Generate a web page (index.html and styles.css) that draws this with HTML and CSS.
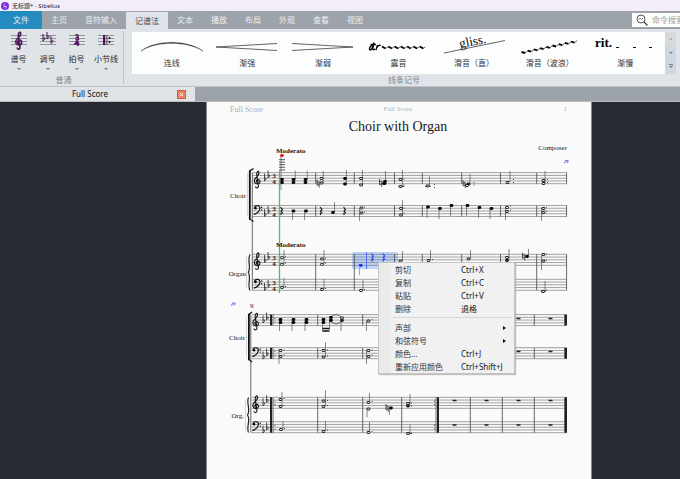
FILE: index.html
```html
<!DOCTYPE html>
<html lang="zh-CN">
<head>
<meta charset="utf-8">
<title>无标题* - Sibelius</title>
<link rel="stylesheet" href="styles.css">
</head>
<body>
<header class="titlebar">
  <svg class="logo" viewBox="0 0 8 8" aria-hidden="true"><circle cx="4" cy="4" r="4" fill="#7a2de0"/><path d="M4 1.4C2.4 3 2.4 3.6 4 4.2S5.600 5.400 4 6.700M2 5.300C3 4 5 4 6 5.300" fill="none" stroke="#e6d4ff" stroke-width=".7"/></svg>
  <span>无标题* - Sibelius</span>
</header>
<nav class="tabs">
  <button class="tab file">文件</button>
  <button class="tab">主页</button>
  <button class="tab">音符输入</button>
  <button class="tab active">记谱法</button>
  <button class="tab">文本</button>
  <button class="tab">播放</button>
  <button class="tab">布局</button>
  <button class="tab">外观</button>
  <button class="tab">查看</button>
  <button class="tab">视图</button>
  <label class="search">
    <svg viewBox="0 0 12 12" aria-hidden="true"><g fill="none" stroke="#444" stroke-width=".9"><circle cx="5" cy="5" r="4"/><path d="M8 8l3.500 3.500" stroke-width="1.300"/><path d="M2.500 5.500l1.500-1.500 1.500 1.500 1.500-1.500" stroke-width=".7"/></g></svg>
    <input type="text" placeholder="命令搜索" aria-label="命令搜索">
  </label>
</nav>
<section class="ribbon">
  <div class="group common">
    <div class="tools">
      <button class="tool">
        <svg viewBox="0 0 16 20"><path class="lines" d="M0 4.500h16M0 7.500h16M0 10.500h16M0 13.500h16"/><path class="purple" d="M8 12.500C6 12 6.300 9 8.600 9C11.600 9.200 11.400 14 8 14C4 13.800 4 9.500 6.500 7.500C9 5.500 10.500 3.500 9.500 1.500C8 .5 7 3.500 7.300 5.500L9 16C9 19 5.800 18.500 6.500 16.500"/></svg>
        <span>谱号</span><i class="caret"></i>
      </button>
      <button class="tool">
        <svg viewBox="0 0 16 20"><path class="lines" d="M0 4.500h16M0 7.500h16M0 10.500h16M0 13.500h16"/><path class="purple thin" d="M3 3v7C6 8 5.500 5.500 3 7.500M7 1v7C10 6 9.500 3.500 7 5.500M11 5v7.500C14 10.500 13.500 8 11 10"/></svg>
        <span>调号</span><i class="caret"></i>
      </button>
      <button class="tool">
        <svg viewBox="0 0 16 20"><path class="lines" d="M0 4.500h16M0 7.500h16M0 10.500h16M0 13.500h16"/><path class="purple" d="M6.500 4.500C8 3 9.500 4 9 5.500L7.800 6.500C10 6.500 10 9 8.500 9L6.500 8.500M8.500 9.500L6 13H10.500M9 10.500V15"/></svg>
        <span>拍号</span><i class="caret"></i>
      </button>
      <button class="tool wide">
        <svg viewBox="0 0 16 20"><path class="lines" d="M0 4.500h16M0 7.500h16M0 10.500h16M0 13.500h16"/><path d="M5 4h2.200v10H5zM8.500 4h.8v10h-.8z" fill="#47104f"/><circle cx="11.500" cy="7" r=".9"/><circle cx="11.500" cy="11" r=".9"/></svg>
        <span>小节线</span><i class="caret"></i>
      </button>
    </div>
    <h2>普通</h2>
  </div>
  <div class="group marks">
    <div class="gallery">
      <div class="items">
        <button class="item"><svg viewBox="0 0 72 24"><path d="M5 19C20 7.500 51 7.500 67 19C51 8.800 20 8.800 5 19z" stroke="#222" stroke-width=".4"/></svg><span>连线</span></button>
        <button class="item"><svg viewBox="0 0 72 24"><path class="hair" d="M66 11.500L5 15L66 18.500"/></svg><span>渐强</span></button>
        <button class="item"><svg viewBox="0 0 72 24"><path class="hair" d="M5 11.500L66 15L5 18.500"/></svg><span>渐弱</span></button>
        <button class="item"><svg viewBox="0 0 72 24"><path d="M9.500 14C7 13 5.500 18 7.200 18C8.800 18 10 14.500 11 10.500L9.800 16.500C9.600 18.500 11 18 12 17M7.500 12.500h5.500M14.500 13L13 18M14 15.500C15.500 13 17 12.500 17.500 14" fill="none" stroke="#000" stroke-width="1.300"/><path class="wave" d="M19 14.500L22.500 16.500M25.300 14.500L28.800 16.500M31.600 14.500L35.100 16.500M37.900 14.500L41.400 16.500M44.200 14.500L47.700 16.500M50.500 14.500L54 16.500M56.800 14.500L60.300 16.500"/><path class="hair" d="M22.500 16.500l2.800-2M28.800 16.500l2.800-2M35.100 16.500l2.800-2M41.400 16.500l2.800-2M47.700 16.500l2.800-2M54 16.500l2.800-2M60.300 16.500l2-1.500"/></svg><span>震音</span></button>
        <button class="item"><svg viewBox="0 0 72 24"><path class="hair" d="M6 21L67 8.500"/><text class="gliss" transform="rotate(-11 22 16)" x="22" y="16">gliss.</text></svg><span>滑音（直）</span></button>
        <button class="item"><svg viewBox="0 0 72 24"><path class="wave" d="M7.500 20l3.500 1M13.700 18.700l3.500 1M19.900 17.400l3.500 1M26.100 16.100l3.500 1M32.300 14.800l3.500 1M38.500 13.500l3.500 1M44.700 12.200l3.500 1M50.900 10.900l3.500 1M57.100 9.600l3.500 1"/><path class="hair" d="M11 21l2.700-2.300M17.200 19.700l2.700-2.300M23.400 18.400l2.700-2.300M29.600 17.100l2.700-2.300M35.800 15.800l2.700-2.300M42 14.500l2.700-2.300M48.200 13.200l2.700-2.300M54.400 11.900l2.700-2.300M60.600 10.600l2.700-2"/></svg><span>滑音（波浪）</span></button>
        <button class="item"><svg viewBox="0 0 72 24"><text class="rit" x="6" y="15">rit.</text><path d="M27 15.500h3M44 15.500h3M60 15.500h3" stroke="#111"/></svg><span>渐慢</span></button>
      </div>
      <div class="scroller">
        <button aria-label="上一行"><i class="caret up"></i></button>
        <button aria-label="下一行"><i class="caret"></i></button>
        <button aria-label="更多"><i class="caret more"></i></button>
      </div>
    </div>
    <h2>线条记号</h2>
  </div>
</section>
<div class="documents">
  <div class="document"><span>Full Score</span><button class="close" aria-label="关闭"><svg viewBox="0 0 9 9"><path d="M2.500 2.500l4 4M6.500 2.500l-4 4" stroke="#fff" stroke-width="1.200"/></svg></button></div>
</div>
<main class="canvas">
  <article class="paper">
    <svg class="score" viewBox="207 102 384 377" role="img" aria-label="Choir with Organ">
      <defs>
        <path id="treble" d="M.2 1.600C-1.600 1.400-1.600-1.300.3-1.500C3-1.600 3.400 2.600.3 3C-3 3.200-4.200-.8-1.800-3C.4-5 2.200-6.600 1.400-9C.6-11-1-8.500-.8-6.500L1 5C1 7.500-2 7.300-2 5.600" fill="none" stroke="#111" stroke-width="1.100"/>
        <g id="bass"><path d="M-3-.7C-2.600-3.600 2.600-3.600 2.400-.3C2.200 3-1 5-3.600 6" fill="none" stroke="#111" stroke-width="1.200"/><circle cx="-2" cy="-.3" r="1.300"/><circle cx="4.200" cy="-1.300" r=".7"/><circle cx="4.200" cy="1.500" r=".7"/></g>
        <path id="flats" d="M0-5V2.500C2.600.6 2-1.500 0-.4M3.600-8V-.5C6.200-2.400 5.600-4.500 3.600-3.400" fill="none" stroke="#222" stroke-width=".8"/>
        <path id="rest" d="M-1-4L1-1.500L-.5 0L1.300 2C-1 1.200-1 2.500-.2 4" fill="none" stroke="currentColor" stroke-width="1.100"/>
        <path id="natural" d="M-1-4V1.800L1.200 1M1.200 4V-1.800L-1-1" fill="none" stroke="#111" stroke-width=".7"/>
        <path id="quaver" d="M-1 1.200L-.5-1H2.200L1.700.8M-2 1.200H-.8M.6.800H1.800" fill="none" stroke="#4b4be8" stroke-width=".8"/>
        <path id="staff" d="M0 0H314.500M0 2.750H314.500M0 5.500H314.500M0 8.250H314.500M0 11H314.500" fill="none" stroke="#666" stroke-width=".6"/>
      </defs>

      <rect x="352" y="252" width="46" height="17" rx="2" fill="#bdd5fa"/>
      <g>
        <use href="#staff" x="252.300" y="172.700"/><use href="#staff" x="252.300" y="205.500"/>
        <use href="#staff" x="252.300" y="254.300"/><use href="#staff" x="252.300" y="279.300"/>
        <use href="#staff" x="251.800" y="314.600"/><use href="#staff" x="251.800" y="347.700"/>
        <use href="#staff" x="251.800" y="397.300"/><use href="#staff" x="251.800" y="421.700"/>
      </g>
      <path class="bar" d="M252.300 172.700V290.300M250.800 314.600V432.700
        M315.700 172.700v11m0 21.800v11m0 37.800v36M354.300 172.700v11m0 21.800v11m0 37.800v36M394.500 172.700v11m0 21.800v11m0 37.800v36M422.300 172.700v11m0 21.800v11m0 37.800v36M461.700 172.700v11m0 21.800v11m0 37.800v36M500.500 172.700v11m0 21.800v11m0 37.800v36M536.700 172.700v11m0 21.800v11m0 37.800v36M566.600 172.700v11m0 21.800v11m0 37.800v36
        M317.700 314.600v11m0 22.100v11m0 38.600v35.400M362.700 314.600v11m0 22.100v11m0 38.600v35.400M401.700 314.600v11m0 22.100v11m0 38.600v35.400M470.300 314.600v11m0 22.100v11m0 38.600v35.400M502.300 314.600v11m0 22.100v11m0 38.600v35.400M534.300 314.600v11m0 22.100v11m0 38.600v35.400
        M273 314.600v11m0 22.100v11m0 38.600v35.400M436 397.300v35.400M564.500 314.600v11m0 22.100v11m0 38.600v35.400"/>
      <path class="heavy" d="M271 314.600v11m0 22.100v11m0 38.600v35.400M438 397.300v35.400M566 314.600v11m0 22.100v11m0 38.600v35.400"/>
      <path d="M249.800 170.500V219.500M248.900 314V360" stroke="#111" stroke-width="1.800"/>
      <path d="M249 171Q251 170.500 253.500 168.500M249 219Q251 219.500 253.500 221.500M248 314.500Q250 314 252 312M248 359.500Q250 360 252 362" fill="none" stroke="#111" stroke-width="1.200"/>
      <path d="M250 254.500C247 260 251.500 267 248.300 272.300C251.500 278 247 285 250 290.500M248.500 397.500C246 403 251 410 247.500 415C251 420 246 427 248.500 432.500" fill="none" stroke="#222" stroke-width="1.200"/>
      <path d="M247.500 173v43M246.500 256v32M246.500 317v40M245.500 400v31" stroke="#bbb" stroke-width=".6"/>

      <g>
        <use href="#treble" x="257.500" y="181"/><use href="#treble" x="257.500" y="262.600"/><use href="#treble" x="256" y="323"/><use href="#treble" x="256" y="405.600"/>
        <use href="#bass" x="257.500" y="208.500"/><use href="#bass" x="257.500" y="282.200"/><use href="#bass" x="256" y="350.600"/><use href="#bass" x="256" y="424.600"/>
        <use href="#flats" x="264.500" y="178.500"/><use href="#flats" x="264.500" y="214"/><use href="#flats" x="264.500" y="260"/><use href="#flats" x="264.500" y="288"/>
        <use href="#flats" x="263" y="320.500"/><use href="#flats" x="263" y="356.500"/><use href="#flats" x="263" y="403.200"/><use href="#flats" x="263" y="430.500"/>
      </g>
      <g class="meter">
        <text x="274" y="178">3</text><text x="274" y="184">4</text><text x="274" y="211">3</text><text x="274" y="217">4</text>
        <text x="274" y="260">3</text><text x="274" y="266">4</text><text x="274" y="285">3</text><text x="274" y="291">4</text>
      </g>

      <path class="stem" d="M281 155V190M295.300 180V170.700M307.300 180V170.700M323.300 183V171M346.500 184V170M362.500 186V170M385.500 183V171M402.500 187V170M429.500 186V176M470 185V174M510 182V171M545 183V171
        M292.500 211V220M304.500 211V220M334.500 212V202M359.500 208V221M402.500 215V200M427 207v11M439 208v11M450.500 205v11M466.500 205v11M478.500 207v11M490 208v11M505.500 207V220M541.500 208V221
        M284 264V250M324 264V250M402.500 261V251M430.500 260V250M470.500 259V250M509 260V249M528.500 256V249M541.500 255V270M284 287v-9M324 289v-10M363 290v-10M545 291v-10
        M279.500 320v11M292 320v11M305 320v11M322.500 320v11M329.500 319v11M341 319v12M366.500 321v10M279 350v14M325.500 357V342M366.500 350v14
        M282 407V392M325.500 406V390M369.500 402V393M367 409V417M389.500 408V415M410 405V394M283 429v-8M325.500 431v-10M369.500 432v-10M410 433.500v-9"/>
      <path d="M322.500 331h7M322.500 328.500h7" stroke="#111" stroke-width="1.300"/>
      <path class="ledger" d="M279 159.700h6M279 162.200h6M279 164.700h6M279 167.300h6M279 170h6M398.500 186.500h6M425 186.500h6M541 291.300h5M406 433.500h6"/>
      <ellipse cx="336" cy="319.300" rx="6" ry="4.500" fill="none" stroke="#333" stroke-width=".7"/>
      <path class="heads" d="M281.500 179.500h1M281.500 182.500h1M293 179.500h1M293 182.500h1M305 179.500h1M305 182.500h1M344.500 178.500h1M344.500 184h1M383.500 183.500h1.500M384.500 181.500h1
        M293 211h1M305.500 211h1M332.500 212.500h1M427.500 207h1M439.500 208.500h1M451 205.500h1M467 205.500h1M479 207.500h1M491 208.500h1M526.500 256.500h1
        M280 319.500h1M280 322.500h1M293 319.500h1M293 322.500h1M306 319.500h1M306 322.500h1M323 319.500h1M323 322.500h1M330.500 317.500h1M330.500 320.500h1M390.500 408h1"/>
      <path class="hollow" d="M321 178.500h1M321 183h1M360.500 178.500h1M360.500 185h1M400 179.500h1M400 186.500h1M427 186h1M466.500 185.500h1M468 184h1M507 182.500h1M543 180.500h1M543 183.500h1
        M361 208h1M361 213h1M400.500 208.500h1M400.500 215h1M506.500 207.500h1M506.500 211.500h1M543 208.500h1M543 212.500h1
        M281.500 257.700h1M281.500 264.300h1M321.500 259h1M321.500 264.300h1M400 261h1M428 260.500h1M468 259h1M506.500 257.500h1M506.500 260.500h1M543 254.500h1M543 261h1M281.500 287.500h1M321.500 289.500h1M360.500 290.500h1M542.500 291.500h1
        M341.500 318h1M341.500 320.500h1M368 321h1M280 350.500h1M280 356.500h1M323 350.500h1M323 357h1M368 350.500h1M368 356.500h1
        M280 399.500h1M280 406.500h1M323 401h1M323 406.500h1M368 402.500h1M368 409h1M407.500 403.500h1M407.500 406h1M280.500 429.500h1M323 431.500h1M368 432.500h1M407.500 433.500h1"/>
      <path class="holes" d="M321 178.500h1M321 183h1M360.500 178.500h1M360.500 185h1M400 179.500h1M400 186.500h1M427 186h1M466.500 185.500h1M507 182.500h1M543 180.500h1M543 183.500h1
        M361 208h1M361 213h1M400.500 208.500h1M400.500 215h1M506.500 207.500h1M506.500 211.500h1M543 208.500h1M543 212.500h1
        M281.500 257.700h1M281.500 264.300h1M321.500 259h1M321.500 264.300h1M400 261h1M428 260.500h1M468 259h1M506.500 257.500h1M543 254.500h1M543 261h1M281.500 287.500h1M321.500 289.500h1M360.500 290.500h1M542.500 291.500h1
        M341.500 318h1M368 321h1M280 350.500h1M280 356.500h1M323 350.500h1M323 357h1M368 350.500h1M368 356.500h1
        M280 399.500h1M280 406.500h1M323 401h1M323 406.500h1M368 402.500h1M368 409h1M407.500 403.500h1M280.500 429.500h1M323 431.500h1M368 432.500h1M407.500 433.500h1"/>
      <path class="dots" d="M404 179h0M404 185h0M434.500 184.500h0M434.500 187.500h0M474 182.500h0M474 185h0M513.500 179.500h0M513.500 182.500h0M547.500 179.500h0M547.500 182.500h0
        M364.500 207h0M364.500 212h0M404 208h0M404 213h0M510.500 206h0M510.500 210h0M546.500 207h0M546.500 211h0
        M285.500 257h0M285.500 263h0M325.500 258h0M325.500 263h0M432.500 259.500h0M546.500 254h0M546.500 260h0M285.500 286.500h0M325.500 288.500h0M364.500 289.500h0M546.500 290h0
        M372 319.500h0M284 350h0M284 355h0M327.500 350h0M327.500 356h0M372 350h0M372 355h0M284 398.500h0M284 405.500h0M327.500 400.500h0M327.500 405.500h0M372 401.500h0M411.500 403h0M411.500 406h0M284.500 428.500h0M327.500 430h0M372 431.500h0M411.500 433h0
        M275 318.500h0M275 322h0M275 351.500h0M275 355h0M275 401h0M275 404.500h0M275 425.500h0M275 429h0M434.500 401h0M434.500 404.500h0M434.500 425.500h0M434.500 429h0"/>
      <path d="M452.500 400.500h4M484.500 400.500h4M516.500 400.500h4M548.500 400.500h4M452.500 425h4M484.500 425h4M516.500 425h4M548.500 425h4M516.500 318.500h4M548.500 318.500h4M516.500 351.500h4M548.500 351.500h4" stroke="#222" stroke-width="1.600"/>
      <g><use href="#natural" x="318" y="183.500"/><use href="#natural" x="380.500" y="183"/><use href="#natural" x="464" y="184"/><use href="#natural" x="523.500" y="256.500"/><use href="#natural" x="387" y="408"/></g>
      <g color="#111"><use href="#rest" x="281.500" y="211"/><use href="#rest" x="321" y="211"/><use href="#rest" x="344.500" y="211"/></g>
      <path d="M279.500 171V293" stroke="#5cb865" stroke-width="1.300"/>
      <ellipse cx="282" cy="155.500" rx="1.900" ry="1.400" fill="#f20d12"/>
      <g color="#2b35f0"><use href="#rest" x="372.300" y="257.500"/><use href="#rest" x="383.700" y="257.500"/><path d="M366.500 252V269" stroke="#4257ee" stroke-width=".8"/><ellipse cx="360.700" cy="265.300" rx="2" ry="1.600" fill="#2436ed"/></g>
      <path d="M359.500 266V275" stroke="#70c96c"/><path d="M371.500 261.500h2.500" stroke="#d4a77e" stroke-width="1.200"/>
      <use href="#quaver" x="566" y="161.500"/><use href="#quaver" x="233" y="304"/>

      <text class="faint large" x="230" y="112">Full Score</text>
      <text class="faint middle" x="398" y="111">Full Score</text>
      <text class="faint end" x="567" y="111">1</text>
      <text class="heading middle" x="398" y="131">Choir with Organ</text>
      <text class="label end" x="567" y="150">Composer</text>
      <text class="tempo" x="276" y="153">Moderato</text>
      <text class="tempo" x="276" y="247">Moderato</text>
      <text class="label end" x="246" y="198">Choir</text>
      <text class="label end" x="246" y="276">Organ</text>
      <text class="label end" x="245" y="340">Choir</text>
      <text class="label end" x="244" y="418">Org.</text>
      <text class="label" x="250" y="308">9</text>
    </svg>
  </article>
  <div class="menu" role="menu">
    <button role="menuitem"><span>剪切</span><kbd>Ctrl+X</kbd></button>
    <button role="menuitem"><span>复制</span><kbd>Ctrl+C</kbd></button>
    <button role="menuitem"><span>粘贴</span><kbd>Ctrl+V</kbd></button>
    <button role="menuitem"><span>删除</span><kbd>退格</kbd></button>
    <hr>
    <button role="menuitem" class="sub"><span>声部</span></button>
    <button role="menuitem" class="sub"><span>和弦符号</span></button>
    <button role="menuitem"><span>颜色...</span><kbd>Ctrl+J</kbd></button>
    <button role="menuitem"><span>重新应用颜色</span><kbd>Ctrl+Shift+J</kbd></button>
  </div>
</main>
</body>
</html>
```
FILE: styles.css
```css
* { box-sizing: border-box; }

body {
  margin: 0;
  height: 100vh;
  display: flex;
  flex-direction: column;
  overflow: hidden;
  background: #282a31;
  color: #30343a;
  font: 8px/12px "Noto Sans", "Noto Sans CJK SC", sans-serif;
}

button, input, kbd {
  font: inherit;
  color: inherit;
  padding: 0;
  border: 0;
  background: none;
}

h2 {
  margin: 0;
  font-size: 8px;
  font-weight: 400;
  color: #80858c;
  text-align: center;
}

.titlebar {
  display: flex;
  align-items: center;
  gap: 3px;
  height: 11px;
  padding-left: 1px;
  background: #f3eef7;
  color: #222;
  font-size: 6px;
}
.logo { width: 8px; height: 8px; }

.tabs {
  display: flex;
  height: 18px;
  background: #9da3aa;
}
.tab {
  flex: none;
  padding: 0 9px;
  color: #eceff2;
}
.tab.file { padding: 0 13px; background: #238bc0; }
.tab.active { margin-top: 1px; background: #e0e3e8; color: #44494f; }

.search {
  display: flex;
  align-items: center;
  gap: 4px;
  flex: none;
  width: 48px;
  margin: 2px 0 2px auto;
  padding-left: 4px;
  background: #fcfdfd;
  overflow: hidden;
}
.search svg { width: 12px; height: 12px; flex: none; }
.search input { flex: 1; min-width: 0; outline: 0; }
.search input::placeholder { color: #9a9da1; opacity: 1; }

.ribbon {
  display: flex;
  height: 57px;
  padding: 2px 4px 0;
  background: #e0e4e8;
}
.common {
  flex: none;
  width: 120px;
  border-right: 1px solid #bfc3c8;
  margin-bottom: 2px;
}
.tools { display: flex; height: 43px; }
.tool {
  display: flex;
  flex-direction: column;
  align-items: center;
  width: 29px;
  color: #25292e;
}
.tool.wide { width: 30px; }
.tool svg { width: 16px; height: 20px; margin-bottom: 2px; }
.tool .caret { margin-top: 3px; }
.lines { fill: none; stroke: #92979d; stroke-width: 1; }
.purple { fill: none; stroke: #4d1759; stroke-width: 1.6; }
.purple.thin { stroke-width: 1; }

.caret {
  width: 0;
  height: 0;
  border: 2px solid transparent;
  border-top-color: #777d84;
  border-bottom: 0;
}
.caret.up { border: 2px solid transparent; border-bottom-color: #a4a7ab; border-top: 0; }

.marks { flex: 1; padding: 1px 0 0 8px; }
.gallery { display: flex; height: 42px; }
.items {
  display: flex;
  flex: 1;
  padding: 0 2px;
  background: #fcfdfd;
}
.item {
  display: flex;
  flex-direction: column;
  align-items: center;
  flex: 1;
  min-width: 0;
  white-space: nowrap;
}
.item svg { width: 72px; height: 24px; margin-bottom: 1px; overflow: visible; }
.hair { fill: none; stroke: #222; stroke-width: .7; }
.wave { fill: none; stroke: #000; stroke-width: 1.9; }
.gliss { font: 13px "Liberation Serif", serif; }
.rit { font: bold 13px "Liberation Serif", serif; }
.scroller { display: flex; flex-direction: column; width: 11px; }
.scroller button {
  display: flex;
  align-items: center;
  justify-content: center;
  flex: 1;
  background: #ced8e3;
}
.scroller button:first-child { background: #d8d9da; }
.scroller .more { position: relative; }
.scroller .more::before {
  content: "";
  position: absolute;
  left: -2px;
  top: -4px;
  width: 4px;
  border-top: 1px solid #777d84;
}

.documents {
  height: 16px;
  border-top: 1px solid #bfc2c6;
  border-bottom: 1px solid #babec3;
  background: #9ca2a9;
}
.document {
  display: flex;
  align-items: center;
  justify-content: flex-end;
  gap: 69px;
  width: 195px;
  height: 14px;
  padding-right: 9px;
  background: #e0e4e8;
  color: #111;
}
.close {
  display: flex;
  width: 9px;
  height: 9px;
  border: 1px solid #d85a3c;
  background: #ee8162;
}

.canvas {
  position: relative;
  flex: 1;
  min-height: 0;
  padding-left: 206px;
  background: #282a31;
}
.paper {
  width: 386px;
  height: 100%;
  border: solid #85888d;
  border-width: 0 1px;
  background: #fafafa;
}
.score { display: block; width: 100%; }
.score text { font-family: "Liberation Serif", serif; fill: #171717; }
.score .faint { font-size: 7px; fill: #aeb1b4; }
.score .faint.large { font-size: 8px; }
.score .heading { font-size: 14px; }
.score .label { font-size: 7px; }
.score .tempo { font-size: 7px; font-weight: 700; }
.score .middle { text-anchor: middle; }
.score .end { text-anchor: end; }
.score .meter text { font-size: 7px; font-weight: 700; text-anchor: middle; }
.bar { fill: none; stroke: #444; stroke-width: .8; }
.heavy { fill: none; stroke: #222; stroke-width: 2; }
.stem { fill: none; stroke: #555; stroke-width: .7; }
.ledger { fill: none; stroke: #333; stroke-width: .8; }
.heads { fill: none; stroke: #080808; stroke-width: 2.8; stroke-linecap: round; }
.hollow { fill: none; stroke: #222; stroke-width: 2.8; stroke-linecap: round; }
.holes { fill: none; stroke: #eee; stroke-width: 1.2; stroke-linecap: round; }
.dots { fill: none; stroke: #222; stroke-width: 1.1; stroke-linecap: round; }

.menu {
  position: absolute;
  left: 378px;
  top: 160px;
  width: 137px;
  border: 1px solid #c4c4c4;
  background: linear-gradient(90deg, #eaeaea 12px, #f1f1f1 12px);
  box-shadow: 1px 1px 1px #9999;
}
.menu button {
  display: flex;
  align-items: center;
  width: 100%;
  height: 13px;
  padding: 0 8px 0 16px;
  white-space: nowrap;
  text-align: left;
}
.menu span { width: 66px; flex: none; }
.menu kbd { color: #151515; }
.menu hr { margin: 2px 2px 3px 14px; border: 0; border-top: 1px solid #d6d6d6; }
.menu .sub { justify-content: space-between; }
.menu .sub::after {
  content: "";
  border: 2px solid transparent;
  border-left: 3px solid #111;
  border-right: 0;
}
```
